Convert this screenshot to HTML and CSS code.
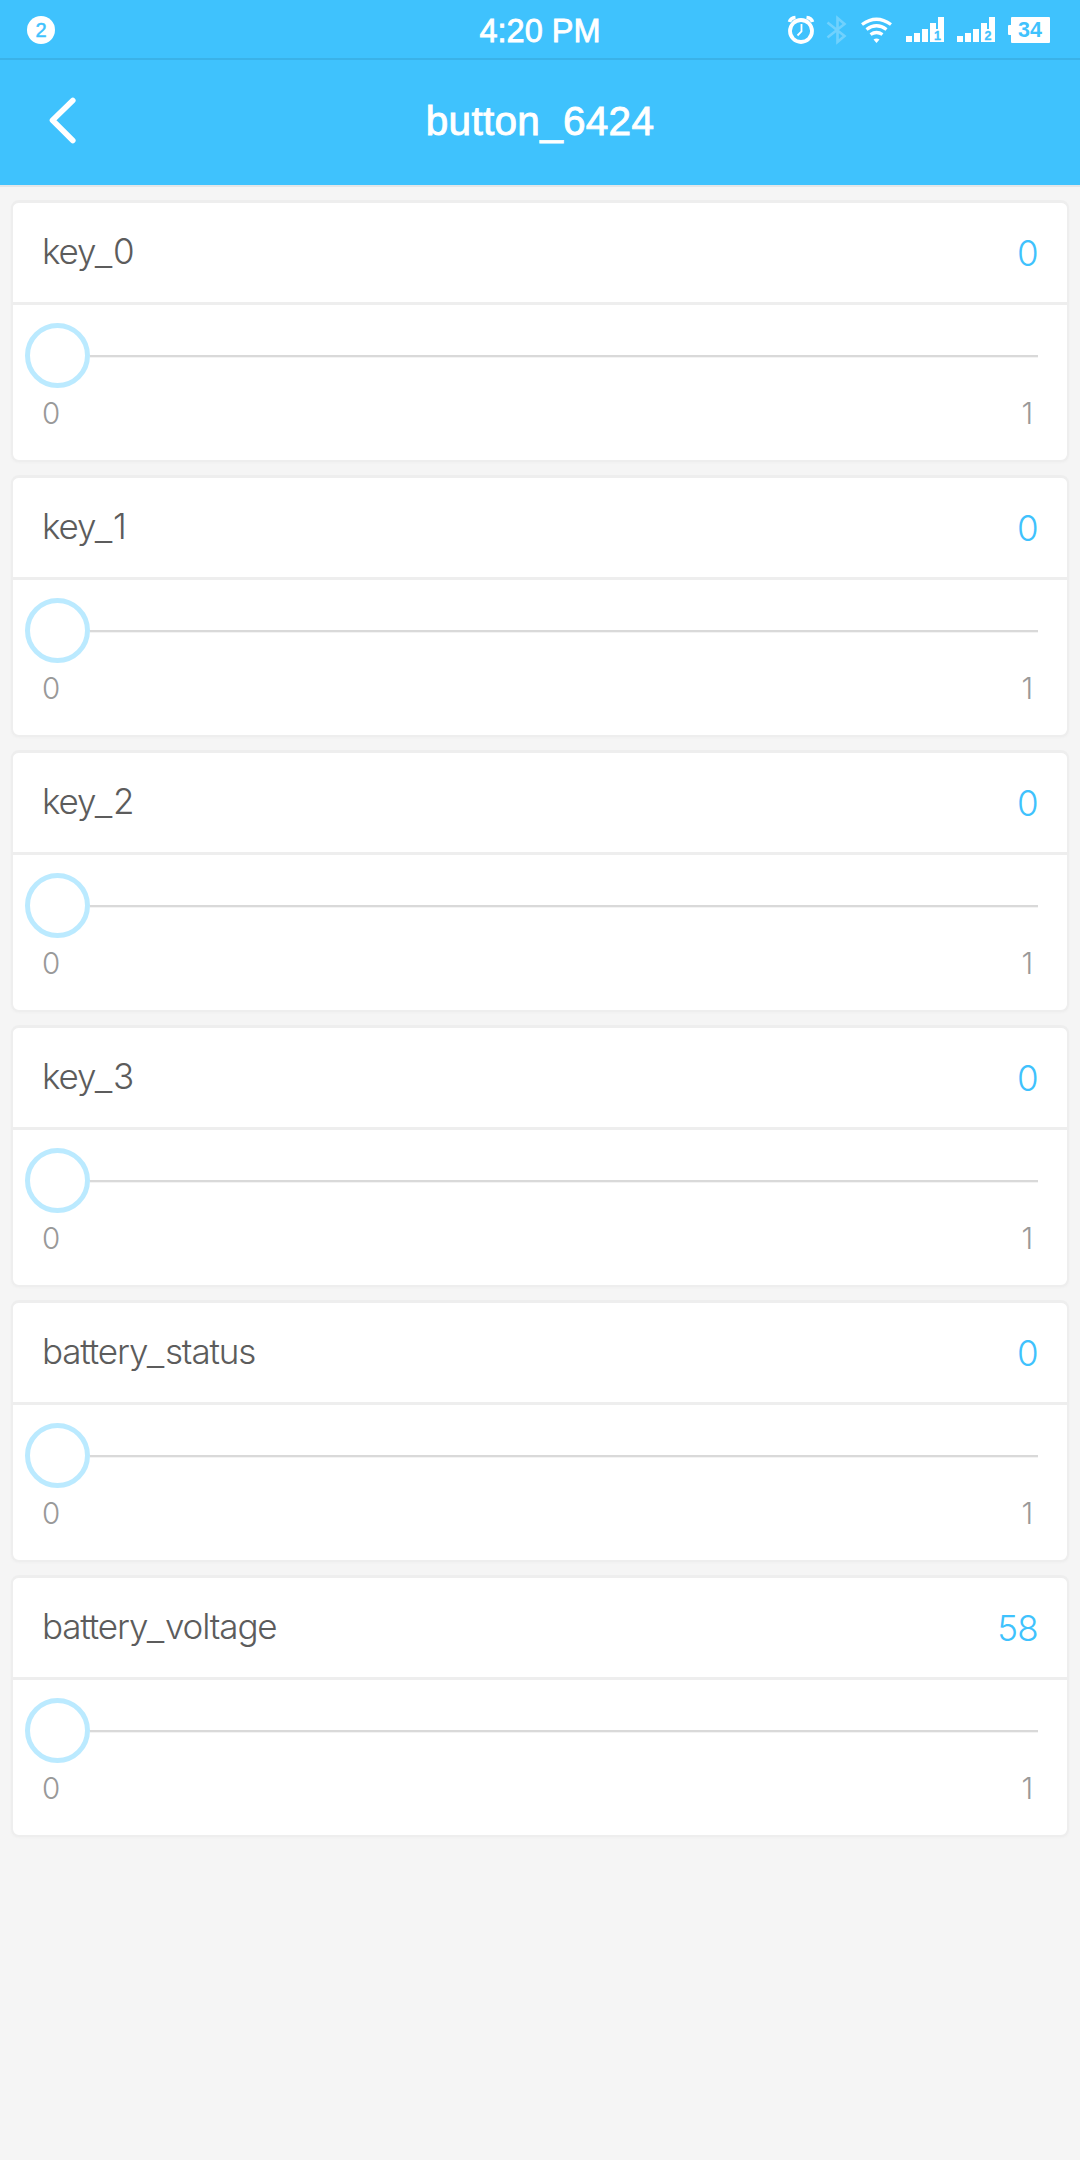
FILE: index.html
```html
<!DOCTYPE html>
<html lang="en">
<head>
<meta charset="utf-8">
<title>button_6424</title>
<link rel="stylesheet" href="styles.css">
</head>
<body>
<div class="status">
  <div class="status-left"><span class="count">2</span></div>
  <div class="clock">4:20 PM</div>
  <div class="status-right">
    <svg class="icons" width="270" height="58" viewBox="0 0 270 58">
      <g fill="none" stroke="#fff">
        <circle cx="21" cy="31" r="11" stroke-width="3.8"/>
        <path d="M21.5 24v7.500l-4 4" stroke-width="1.800"/>
        <path d="M9.500 22Q10.500 18 15.500 17.500M32.500 22Q31.500 18 26.500 17.500" stroke-width="3.600"/>
        <path d="M47.500 22.500L64.500 36L57.500 42V18L64.500 24L47.500 37.500" stroke-width="2.600" opacity=".26"/>
        <path d="M82 24.500Q96.500 14 111 24.500M86.500 29.500Q96.500 22 106.500 29.500M90.500 34.500Q96.500 30.500 102.500 34.500" stroke-width="3.300"/>
      </g>
      <path fill="#fff" d="M93.500 39.500Q96.500 37.500 99.500 39.500L96.500 43z"/>
      <path fill="#fff" d="M126 36h6v6h-6zM134 33h6v9h-6zM142 29h6v13h-6zM150 23h6v6h2V17h6v25h-14z"/>
      <path fill="#fff" d="M177 36h6v6h-6zM185 33h6v9h-6zM193 29h6v13h-6zM201 23h6v6h2V17h6v25h-14z"/>
      <text class="sim" x="154" y="40">1</text>
      <text class="sim" x="204.500" y="40">2</text>
      <path fill="#fff" d="M232 17h37q1 0 1 1v24q0 1-1 1h-37q-1 0-1-1v-7h-2q-1 0-1-1v-8q0-1 1-1h2v-7q0-1 1-1z"/>
      <text class="charge" x="250" y="37">34</text>
    </svg>
  </div>
</div>
<header class="bar">
  <svg width="80" height="60" viewBox="0 0 80 60"><path d="M72.800 9.500L52.500 29.200L72.800 49.500" fill="none" stroke="#fff" stroke-width="5.600" stroke-linecap="round" stroke-linejoin="round"/></svg>
  <h1 class="title">button_6424</h1>
</header>
<main class="list">
  <section class="card">
    <div class="row"><span class="name">key<span class="dash">_</span>0</span><span class="value">0</span></div>
    <div class="slider"><i class="thumb"></i><i class="track"></i></div>
    <div class="range"><span>0</span><span class="max">1</span></div>
  </section>
  <section class="card">
    <div class="row"><span class="name">key<span class="dash">_</span>1</span><span class="value">0</span></div>
    <div class="slider"><i class="thumb"></i><i class="track"></i></div>
    <div class="range"><span>0</span><span class="max">1</span></div>
  </section>
  <section class="card">
    <div class="row"><span class="name">key<span class="dash">_</span>2</span><span class="value">0</span></div>
    <div class="slider"><i class="thumb"></i><i class="track"></i></div>
    <div class="range"><span>0</span><span class="max">1</span></div>
  </section>
  <section class="card">
    <div class="row"><span class="name">key<span class="dash">_</span>3</span><span class="value">0</span></div>
    <div class="slider"><i class="thumb"></i><i class="track"></i></div>
    <div class="range"><span>0</span><span class="max">1</span></div>
  </section>
  <section class="card">
    <div class="row"><span class="name">battery<span class="dash">_</span>status</span><span class="value">0</span></div>
    <div class="slider"><i class="thumb"></i><i class="track"></i></div>
    <div class="range"><span>0</span><span class="max">1</span></div>
  </section>
  <section class="card">
    <div class="row"><span class="name">battery<span class="dash">_</span>voltage</span><span class="value">58</span></div>
    <div class="slider"><i class="thumb"></i><i class="track"></i></div>
    <div class="range"><span>0</span><span class="max">1</span></div>
  </section>
</main>
</body>
</html>
```
FILE: styles.css
```css
* { box-sizing: border-box; }
body {
  margin: 0;
  min-height: 2160px;
  background: #f5f5f5;
  font-family: Inter, "Liberation Sans", sans-serif;
  font-weight: 300;
}
.status {
  display: grid;
  grid-template-columns: 1fr auto 1fr;
  align-items: center;
  height: 60px;
  padding: 0 30px 0 27px;
  background: #3fc2fd;
  border-bottom: 2px solid #3ab2e8;
  color: #fff;
  font-family: "Liberation Sans", Arial, sans-serif;
  font-weight: 400;
}
.count {
  display: block;
  width: 28px;
  height: 28px;
  margin-top: 2px;
  border-radius: 50%;
  background: #fff;
  color: #3fc2fd;
  font-size: 20px;
  line-height: 29px;
  text-align: center;
  -webkit-text-stroke: .5px #3fc2fd;
}
.clock {
  padding: 3px 0 0 3px;
  font-size: 32.5px;
  line-height: 36px;
  -webkit-text-stroke: .8px #fff;
}
.status-right { display: flex; justify-content: flex-end; }
.icons { display: block; }
.sim { font-size: 12.5px; font-weight: 700; fill: #3fc2fd; stroke: #3fc2fd; stroke-width: .3px; }
.charge { font-size: 21.5px; font-weight: 700; fill: #3fc2fd; text-anchor: middle; }
.bar {
  display: grid;
  grid-template-columns: 80px 1fr 80px;
  align-items: center;
  height: 127px;
  background: #3fc2fd;
  border-bottom: 2px solid #e3e6e8;
}
.bar svg { margin-top: -4px; }
.title {
  margin: 0;
  padding-bottom: 4px;
  color: #fff;
  font: 400 40.5px/48px "Liberation Sans", Arial, sans-serif;
  letter-spacing: .3px;
  text-align: center;
  -webkit-text-stroke: .9px #fff;
}
.list {
  display: flex;
  flex-direction: column;
  gap: 13px;
  padding: 13px 11px 0 11px;
}
.card {
  height: 262px;
  border: 2px solid #eee;
  border-top-width: 3px;
  border-radius: 8px;
  background: #fff;
  box-shadow: 0 1px 2px #f0f0f0;
}
.row {
  display: flex;
  justify-content: space-between;
  height: 102px;
  padding: 27px 29px 0 29px;
  border-bottom: 3px solid #eee;
  font-size: 35px;
  line-height: 42px;
}
.name { color: #5c5c5c; letter-spacing: -1.15px; }
.dash {
  margin-right: 1px;
  font: 400 30px/1 "Liberation Sans", Arial, sans-serif;
  letter-spacing: 0;
  vertical-align: 2px;
}
.value { padding-top: 2px; color: #3fc2fd; letter-spacing: -.7px; }
.slider {
  display: flex;
  align-items: center;
  height: 65px;
  margin: 18px 29px 0 12px;
}
.thumb {
  width: 65px;
  height: 65px;
  border: 5px solid #bbeaff;
  border-radius: 50%;
}
.track { flex: 1; height: 2px; margin-top: 1px; background: #d9d9d9; box-shadow: 0 1px #f3f3f3; }
.range {
  display: flex;
  justify-content: space-between;
  padding: 7px 34px 0 29px;
  color: #999;
  font-size: 29.5px;
  line-height: 36px;
}
```
